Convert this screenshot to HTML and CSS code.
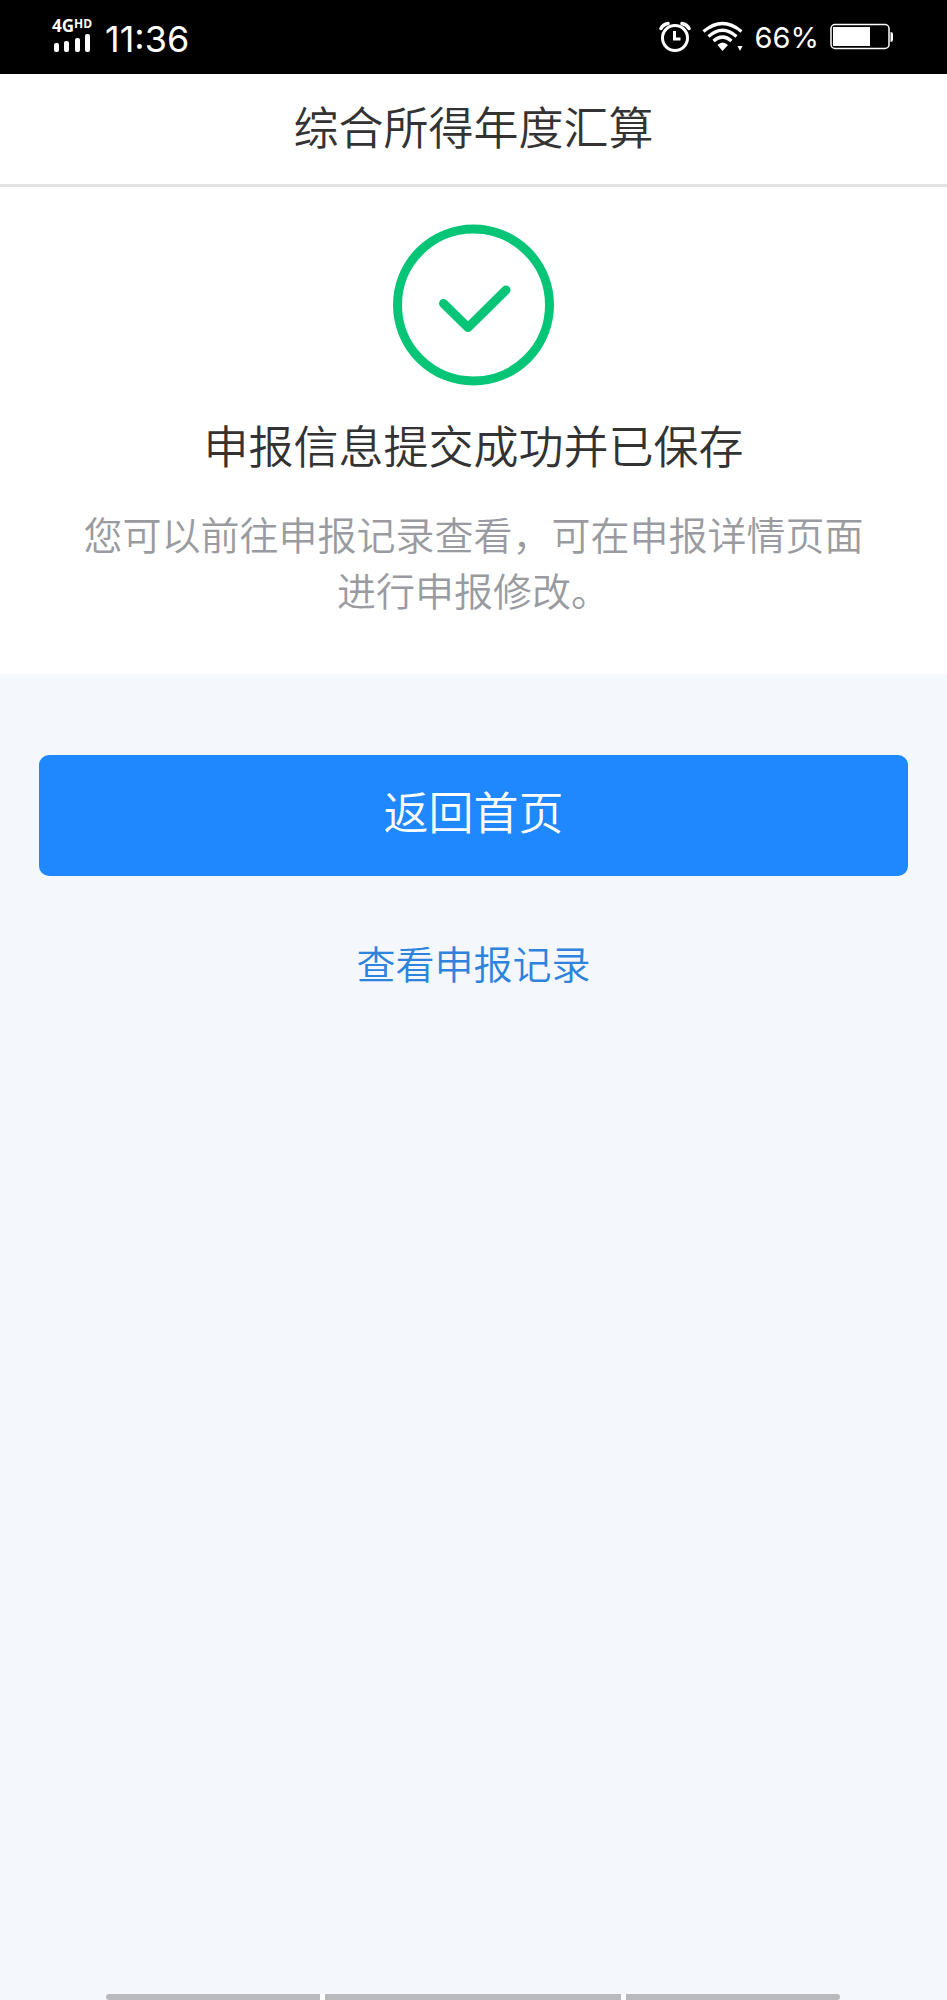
FILE: index.html
```html
<!DOCTYPE html>
<html lang="zh-CN">
<head>
<meta charset="utf-8">
<meta name="viewport" content="width=device-width, initial-scale=1">
<title>综合所得年度汇算</title>
<link rel="stylesheet" href="styles.css">
</head>
<body>
<div class="status-bar">
  <div class="status-group">
    <div class="signal">
      <div class="network"><span>4G</span><span class="network-hd">HD</span></div>
      <svg class="signal-bars" width="38" height="20" viewBox="0 0 38 20" fill="#fff" aria-hidden="true">
        <rect x="0" y="10" width="5" height="9" rx="2"/>
        <rect x="10" y="8" width="5" height="11" rx="2"/>
        <rect x="21" y="5" width="5" height="14" rx="2"/>
        <rect x="31" y="1" width="5" height="18" rx="2"/>
      </svg>
    </div>
    <span class="time">11:36</span>
  </div>
  <div class="status-group status-right">
    <svg class="alarm" width="32" height="32" viewBox="0 0 32 32" fill="none" stroke="#fff" aria-hidden="true">
      <circle cx="16" cy="17" r="12.5" stroke-width="3"/>
      <path d="M15.500 10v8h6" stroke-width="3"/>
      <path d="M2 7.500Q4 3.500 9 2.500M30 7.500Q28 3.500 23 2.500" stroke-width="3.500" stroke-linecap="round"/>
    </svg>
    <svg class="wifi" width="42" height="32" viewBox="0 0 42 32" fill="none" stroke="#fff" stroke-width="3.200" aria-hidden="true">
      <path d="M1.500 10.500Q20.500 -5.500 39.500 10.500"/>
      <path d="M6.500 15.500Q20.500 3 34.500 15.500"/>
      <path d="M11.500 20Q20.500 12 29.500 20"/>
      <path d="M15.500 24Q20.500 19 26 24L20.500 30Z" fill="#fff" stroke="none"/>
      <path d="M35.500 25h5L38 30Z" fill="#fff" stroke="none"/>
    </svg>
    <span class="percent">66%</span>
    <svg class="battery" width="64" height="28" viewBox="0 0 64 28" aria-hidden="true">
      <rect x="1" y="1.500" width="58" height="24" rx="4" fill="none" stroke="#fff" stroke-width="1.500"/>
      <rect x="3" y="4" width="37" height="19" fill="#fff"/>
      <path d="M60.500 9Q63 9 63 11v6q0 2-2.500 2Z" fill="#fff"/>
    </svg>
  </div>
</div>
<header class="title-bar"><h1 class="title">综合所得年度汇算</h1></header>
<main class="content">
  <section class="result">
    <svg class="result-icon" width="162" height="162" viewBox="0 0 162 162" fill="none" stroke="#07c576" stroke-width="9" aria-hidden="true">
      <circle cx="80.500" cy="81" r="76"/>
      <path d="M50.500 79.500L75 103.500L113 66" stroke-linecap="round" stroke-linejoin="round"/>
    </svg>
    <h2 class="result-title">申报信息提交成功并已保存</h2>
    <p class="result-text">您可以前往申报记录查看，可在申报详情页面进行申报修改。</p>
  </section>
  <div class="actions">
    <button class="home-button" type="button">返回首页</button>
    <a class="records-link" href="#">查看申报记录</a>
  </div>
</main>
<div class="nav-hints"><span class="hint hint-first"></span><span class="hint hint-middle"></span><span class="hint hint-last"></span></div>
</body>
</html>
```
FILE: styles.css
```css
* {
  box-sizing: border-box;
}

body {
  margin: 0;
  min-height: 100vh;
  display: flex;
  flex-direction: column;
  background: #f4f7fb;
  color: #333;
  font-family: "Noto Sans CJK SC", sans-serif;
  font-weight: 350;
}

.status-bar {
  height: 74px;
  padding: 0 53px 0 52px;
  display: flex;
  align-items: center;
  justify-content: space-between;
  background: #000;
  color: #fff;
  font-family: Inter, sans-serif;
  font-weight: 400;
}

.status-group {
  display: flex;
  align-items: center;
  gap: 11px;
  padding-top: 4px;
}

.signal {
  display: flex;
  flex-direction: column;
  width: 42px;
  padding-bottom: 6px;
}

.network {
  display: flex;
  align-items: flex-start;
  font-family: "Open Sans", sans-serif;
  font-size: 17px;
  font-weight: 700;
  line-height: 14px;
}

.network-hd {
  font-size: 12px;
  line-height: 10px;
}

.signal-bars {
  margin-left: 2px;
}

.time {
  font-size: 36px;
  line-height: 40px;
}

.status-right {
  padding-top: 0;
}

.percent {
  font-size: 29px;
  line-height: 32px;
  padding-top: 2px;
}

.title-bar {
  padding: 18px 0 24px;
  border-bottom: 3px solid #e2e2e2;
  background: #fff;
  text-align: center;
}

.title,
.result-title {
  margin: 0;
  font-size: 45px;
  line-height: 68px;
  font-weight: 350;
}

.content {
  flex: 1;
}

.result {
  padding: 37px 70px 57px;
  background: #fff;
  text-align: center;
}

.result-icon {
  display: block;
  margin: 0 auto 25px;
}

.result-text {
  margin: 26px 0 0;
  color: #999ba0;
  font-size: 39px;
  line-height: 56px;
}

.actions {
  padding: 81px 39px;
  display: flex;
  flex-direction: column;
  align-items: center;
  gap: 56px;
}

.home-button {
  width: 100%;
  padding: 22px 0 31px;
  border: 0;
  border-radius: 10px;
  background: #2088ff;
  color: #fff;
  font: inherit;
  font-size: 45px;
  line-height: 68px;
}

.records-link {
  color: #2e83dc;
  font-size: 39px;
  line-height: 60px;
  text-decoration: none;
}

.nav-hints {
  padding: 0 107px 0 106px;
  display: flex;
  gap: 5px;
  background: linear-gradient(#fff, #fff) center / 520px 100% no-repeat;
}

.hint {
  flex: 214;
  height: 6px;
  background: #b8b9bd;
}

.hint-first {
  border-radius: 3px 0 0 3px;
}

.hint-middle {
  flex: 297;
}

.hint-last {
  border-radius: 0 3px 3px 0;
}
```
